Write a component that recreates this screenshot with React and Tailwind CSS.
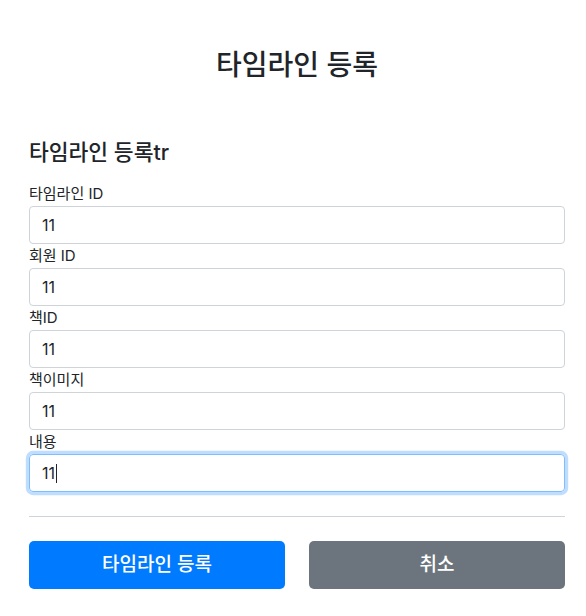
export default function App() {
  const fields = [
    { label: "타임라인 ID", value: "11" },
    { label: "회원 ID", value: "11" },
    { label: "책ID", value: "11" },
    { label: "책이미지", value: "11" },
  ];
  return (
    <div
      className="w-[586px] h-[616px] bg-white pl-[29px] pr-[21px] text-[#212529]"
      style={{ fontFamily: 'Inter, "Noto Sans CJK KR", sans-serif' }}
    >
      <div className="pt-[45px] text-center text-[28px] leading-[40px] font-medium">타임라인 등록</div>
      <div className="mt-[52px] text-[21.5px] leading-[30px] font-medium">타임라인 등록tr</div>
      <div className="mt-[15px] flex flex-col">
        {fields.map((f) => (
          <div key={f.label} className="flex flex-col">
            <label className="text-[15px] leading-[24px]">{f.label}</label>
            <div className="h-[38px] border border-[#ced4da] rounded-[4px] px-[12px] flex items-center text-[16px]">
              {f.value}
            </div>
          </div>
        ))}
        <div className="flex flex-col">
          <label className="text-[15px] leading-[24px]">내용</label>
          <div className="h-[38px] border border-[#80bdff] rounded-[4px] px-[12px] flex items-center text-[16px] shadow-[0_0_0_3.2px_rgba(0,123,255,0.25)]">
            11<span className="inline-block w-px h-[19px] bg-[#212529] ml-px"></span>
          </div>
        </div>
      </div>
      <div className="mt-[24px] border-t border-[#ced4da]"></div>
      <div className="mt-[24px] flex gap-[24px]">
        <button className="flex-1 h-[48px] rounded-[5px] bg-[#007bff] text-white text-[19px] font-medium">타임라인 등록</button>
        <button className="flex-1 h-[48px] rounded-[5px] bg-[#6c757d] text-white text-[19px] font-medium">취소</button>
      </div>
    </div>
  );
}
